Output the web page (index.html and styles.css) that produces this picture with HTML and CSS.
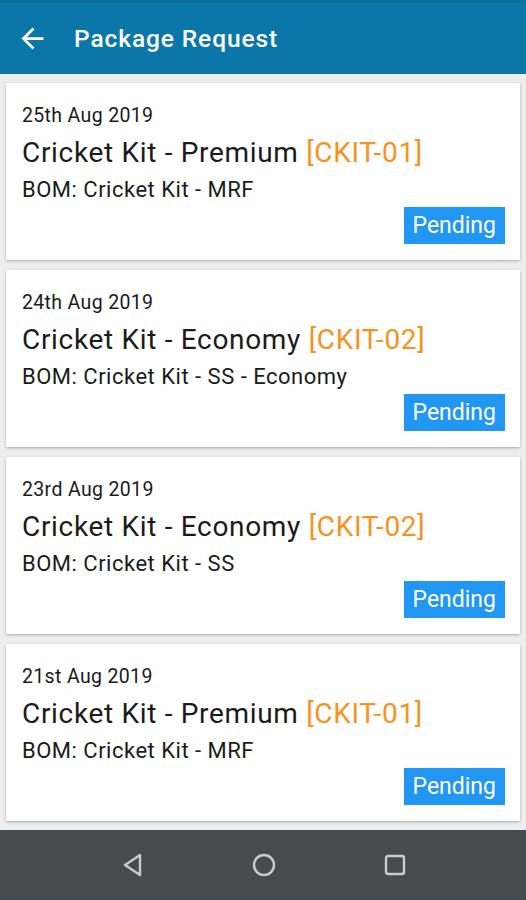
FILE: index.html
```html
<!DOCTYPE html>
<html>
<head>
    <title>Package Request</title>
    <meta charset="utf-8">
    <meta name="viewport" content="width=device-width, initial-scale=1">
    <link rel="stylesheet" href="styles.css">
</head>
<body>
    <div class="app">
        <div class="toolbar">
            <svg class="back" width="33" height="33" viewBox="0 0 24 24"><path d="M20 11H7.83l5.59-5.59L12 4l-8 8 8 8 1.41-1.41L7.83 13H20v-2z" fill="#fff"/></svg>
            <h1>Package Request</h1>
        </div>
        <div class="list">
            <div class="card">
                <div class="date">25th Aug 2019</div>
                <div class="title">Cricket Kit - Premium <span class="code">[CKIT-01]</span></div>
                <div class="bom">BOM: Cricket Kit - MRF</div>
                <div class="status-row"><span class="badge">Pending</span></div>
            </div>
            <div class="card">
                <div class="date">24th Aug 2019</div>
                <div class="title">Cricket Kit - Economy <span class="code">[CKIT-02]</span></div>
                <div class="bom">BOM: Cricket Kit - SS - Economy</div>
                <div class="status-row"><span class="badge">Pending</span></div>
            </div>
            <div class="card">
                <div class="date">23rd Aug 2019</div>
                <div class="title">Cricket Kit - Economy <span class="code">[CKIT-02]</span></div>
                <div class="bom">BOM: Cricket Kit - SS</div>
                <div class="status-row"><span class="badge">Pending</span></div>
            </div>
            <div class="card">
                <div class="date">21st Aug 2019</div>
                <div class="title">Cricket Kit - Premium <span class="code">[CKIT-01]</span></div>
                <div class="bom">BOM: Cricket Kit - MRF</div>
                <div class="status-row"><span class="badge">Pending</span></div>
            </div>
        </div>
        <div class="navbar">
            <svg width="24" height="26" viewBox="0 0 24 26"><path d="M19 3 L4 13 L19 23 Z" fill="none" stroke="#c9ccce" stroke-width="2.4" stroke-linejoin="round"/></svg>
            <svg width="26" height="26" viewBox="0 0 26 26"><circle cx="13" cy="13" r="10" fill="none" stroke="#c9ccce" stroke-width="2.4"/></svg>
            <svg width="24" height="24" viewBox="0 0 24 24"><rect x="3" y="3" width="18" height="18" rx="2" fill="none" stroke="#c9ccce" stroke-width="2.4"/></svg>
        </div>
    </div>
</body>
</html>
```

FILE: styles.css
```css
* { margin: 0; padding: 0; box-sizing: border-box; }
body { font-family: Roboto, "Liberation Sans", sans-serif; background: #eeeeee; color: #1b1b1b; }
.app { width: 526px; height: 900px; display: flex; flex-direction: column; }
.toolbar { height: 74px; background: #0b77a8; border-top: 3px solid #0a6f9d; display: flex; align-items: center; padding: 0 0 0 16px; color: #fff; }
.toolbar h1 { font-size: 24.5px; font-weight: 500; margin-left: 25px; letter-spacing: 0.9px; }
.back { flex: none; }
.list { flex: 1; padding: 9px 6px 0; display: flex; flex-direction: column; gap: 10px; }
.card { background: #fff; height: 177px; padding: 21px 15px 15px 16px; box-shadow: 0 1px 3px rgba(0,0,0,0.3); border-radius: 1px; }
.date { font-size: 19.5px; line-height: 24px; letter-spacing: 0.35px; }
.title { font-size: 28px; line-height: 34px; margin-top: 8px; letter-spacing: 0.68px; }
.code { color: #f7921e; }
.bom { font-size: 22px; line-height: 28px; margin-top: 6px; letter-spacing: 0.5px; }
.status-row { display: flex; justify-content: flex-end; margin-top: 3px; }
.badge { background: #2196f3; color: #fff; font-size: 23px; line-height: 37px; height: 37px; padding: 0 9px; }
.navbar { height: 70px; background: #454c51; display: flex; align-items: center; justify-content: center; gap: 106px; padding-left: 2px; }
```
